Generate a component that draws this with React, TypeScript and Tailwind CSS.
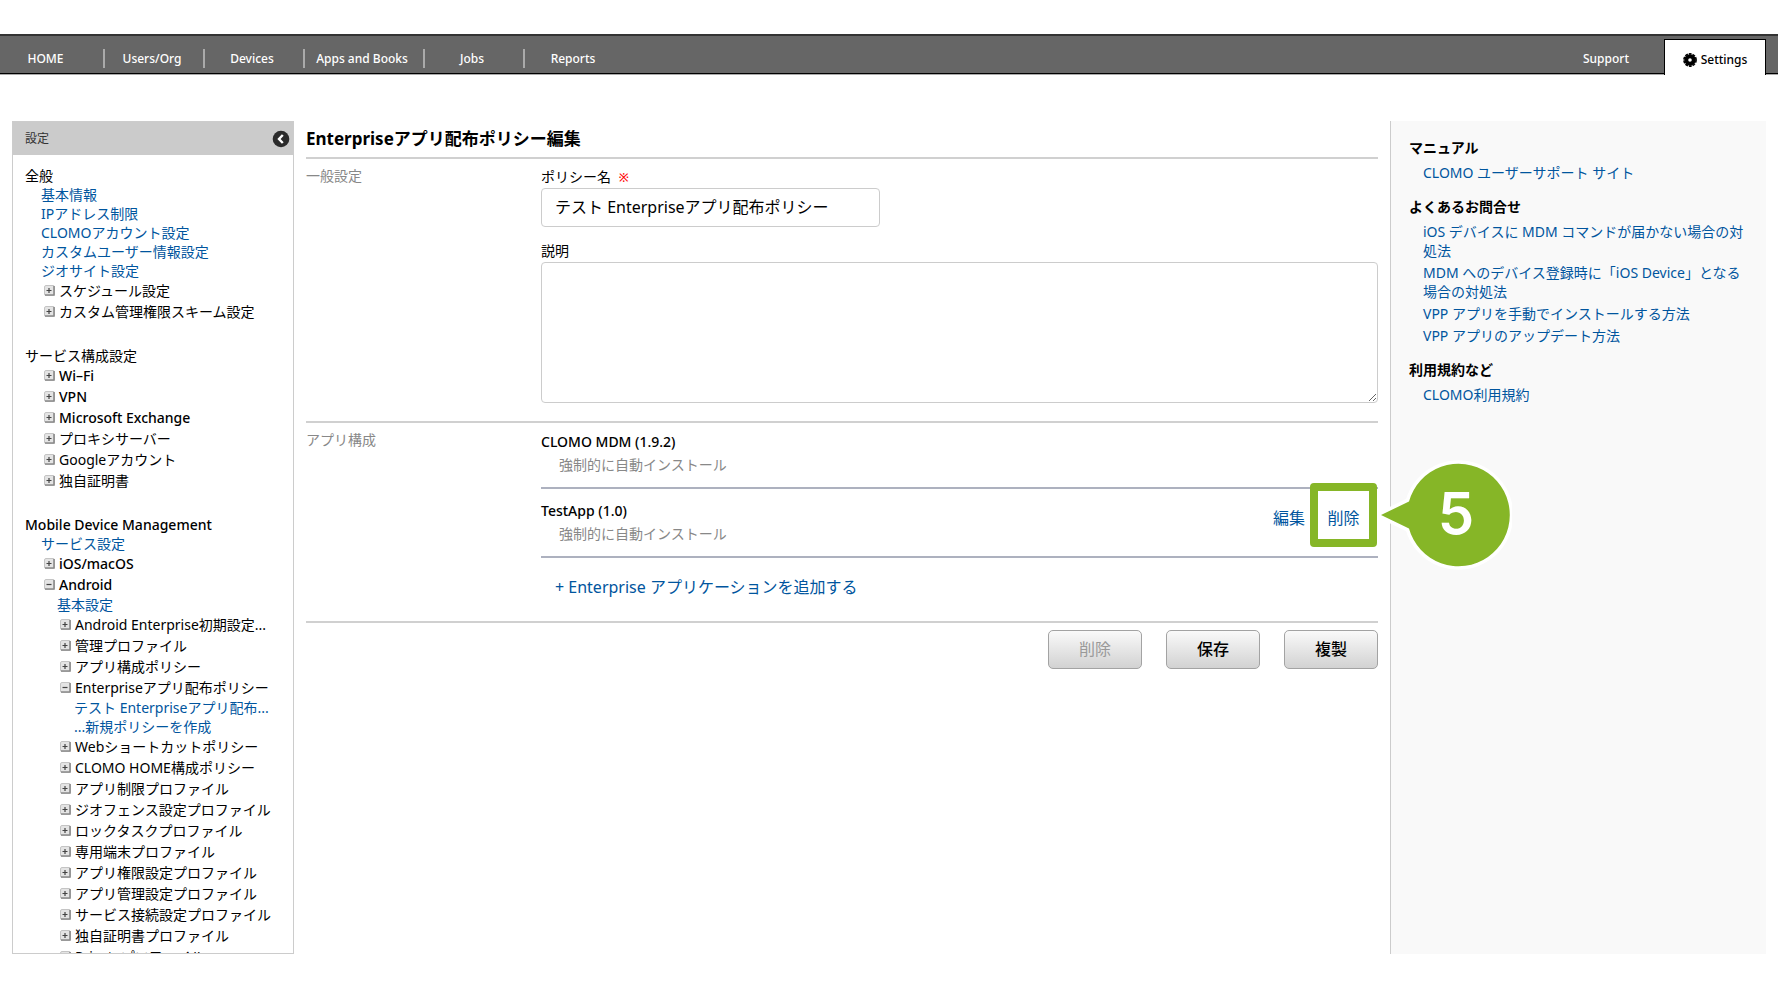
import React from "react";

const FONT = "font-['Noto_Sans','Noto_Sans_CJK_JP',sans-serif]";

type Row = { text: string; kind: "heading" | "link" | "closed" | "open"; level?: number };

const sections: Row[][] = [
  [
    { text: "全般", kind: "heading" },
    { text: "基本情報", kind: "link" },
    { text: "IPアドレス制限", kind: "link" },
    { text: "CLOMOアカウント設定", kind: "link" },
    { text: "カスタムユーザー情報設定", kind: "link" },
    { text: "ジオサイト設定", kind: "link" },
    { text: "スケジュール設定", kind: "closed" },
    { text: "カスタム管理権限スキーム設定", kind: "closed" },
  ],
  [
    { text: "サービス構成設定", kind: "heading" },
    { text: "Wi–Fi", kind: "closed" },
    { text: "VPN", kind: "closed" },
    { text: "Microsoft Exchange", kind: "closed" },
    { text: "プロキシサーバー", kind: "closed" },
    { text: "Googleアカウント", kind: "closed" },
    { text: "独自証明書", kind: "closed" },
  ],
  [
    { text: "Mobile Device Management", kind: "heading" },
    { text: "サービス設定", kind: "link" },
    { text: "iOS/macOS", kind: "closed" },
    { text: "Android", kind: "open" },
    { text: "基本設定", kind: "link", level: 1 },
    { text: "Android Enterprise初期設定...", kind: "closed", level: 1 },
    { text: "管理プロファイル", kind: "closed", level: 1 },
    { text: "アプリ構成ポリシー", kind: "closed", level: 1 },
    { text: "Enterpriseアプリ配布ポリシー", kind: "open", level: 1 },
    { text: "テスト Enterpriseアプリ配布...", kind: "link", level: 2 },
    { text: "...新規ポリシーを作成", kind: "link", level: 2 },
    { text: "Webショートカットポリシー", kind: "closed", level: 1 },
    { text: "CLOMO HOME構成ポリシー", kind: "closed", level: 1 },
    { text: "アプリ制限プロファイル", kind: "closed", level: 1 },
    { text: "ジオフェンス設定プロファイル", kind: "closed", level: 1 },
    { text: "ロックタスクプロファイル", kind: "closed", level: 1 },
    { text: "専用端末プロファイル", kind: "closed", level: 1 },
    { text: "アプリ権限設定プロファイル", kind: "closed", level: 1 },
    { text: "アプリ管理設定プロファイル", kind: "closed", level: 1 },
    { text: "サービス接続設定プロファイル", kind: "closed", level: 1 },
    { text: "独自証明書プロファイル", kind: "closed", level: 1 },
    { text: "Privateプロファイル", kind: "closed", level: 1 },
  ],
];

const indents = ["pl-4", "pl-8", "pl-[49px]"];

// Latin-only labels read lighter than Japanese ones, so they get a heavier weight.
const weightOf = (text: string) => (/^[ -~–]+$/.test(text) ? "font-medium" : "font-normal");

function ToggleIcon({ open }: { open: boolean }) {
  return (
    <svg width="11" height="11" viewBox="0 0 11 11" className="shrink-0" aria-hidden="true">
      <rect x="0.5" y="0.5" width="10" height="10" rx="1.5" fill="#e4e4e4" stroke="#c4c4c4" />
      <path d="M10 1v9H1" fill="none" stroke="#8a8a8a" strokeWidth="1.6" />
      <path d={open ? "M2.500 5.500h5" : "M2.500 5.500h5M5 3v5"} stroke="#444" strokeWidth="1.2" />
    </svg>
  );
}

function SidebarRow({ row }: { row: Row }) {
  const indent = indents[row.level ?? 0];
  if (row.kind === "heading")
    return <h3 className={`${weightOf(row.text)} leading-[19px]`}>{row.text}</h3>;
  if (row.kind === "link")
    return (
      <div className={indent}>
        <a href="#" className="block leading-[19px] text-[#00559e]">{row.text}</a>
      </div>
    );
  return (
    <div className={indent}>
      <button
        type="button"
        className={`${weightOf(row.text)} ml-[3px] flex items-center gap-1 leading-[21px]`}
      >
        <ToggleIcon open={row.kind === "open"} />
        {row.text}
      </button>
    </div>
  );
}

const navItems = [
  { label: "HOME", width: "w-[105px] pr-3" },
  { label: "Users/Org", width: "w-[100px] pr-1" },
  { label: "Devices", width: "w-[100px] pr-1" },
  { label: "Apps and Books", width: "w-[120px] pr-1" },
  { label: "Jobs", width: "w-[100px] pr-1" },
  { label: "Reports", width: "w-[100px] pr-1" },
];

function GearIcon() {
  return (
    <svg width="14" height="14" viewBox="0 0 14 14" aria-hidden="true">
      <circle cx="7" cy="7" r="3.800" fill="none" stroke="#000" strokeWidth="4" />
      <circle cx="7" cy="7" r="6.100" fill="none" stroke="#000" strokeWidth="1.600" strokeDasharray="2.800 1.030" />
    </svg>
  );
}

function TopNav() {
  return (
    <nav className="mt-[34px] flex h-10 shrink-0 justify-between border-t-2 border-b border-t-[#333] border-b-black bg-[#666] pr-3 text-xs font-medium text-white shadow-[0_1px_0_#aaa]">
      <ul className="flex items-center pt-3 pb-1">
        {navItems.map((item, i) => (
          <li
            key={item.label}
            className={`${item.width} text-center ${i < navItems.length - 1 ? "border-r-2 border-[#aaa]" : ""}`}
          >
            <a href="#" className="block leading-[19px]">{item.label}</a>
          </li>
        ))}
      </ul>
      <div className="flex">
        <a href="#" className="mr-[35px] pt-[13px] leading-[19px]">Support</a>
        <a
          href="#"
          className="mt-[3px] -mb-0.5 flex w-[102px] items-center justify-center gap-1 border border-b-0 border-black bg-white pt-1 text-black"
        >
          <GearIcon />
          Settings
        </a>
      </div>
    </nav>
  );
}

function Sidebar() {
  return (
    <aside className="w-[282px] shrink-0 overflow-hidden border border-[#ccc]">
      <div className="flex h-[33px] items-center justify-between bg-[#cbcbcb] pr-[3px] pl-3">
        <h2 className="text-xs text-[#333]">設定</h2>
        <button type="button" aria-label="サイドバーを閉じる">
          <svg width="18" height="18" viewBox="0 0 18 18" aria-hidden="true">
            <circle cx="9" cy="9" r="8.300" fill="#2b2b2b" />
            <path d="M10.800 5L7 9l3.800 4" fill="none" stroke="#fff" strokeWidth="2.400" />
          </svg>
        </button>
      </div>
      <div className="flex flex-col gap-6 pt-[11px] pl-3 text-sm whitespace-nowrap">
        {sections.map((rows) => (
          <section key={rows[0].text}>
            {rows.map((row) => (
              <SidebarRow key={row.text} row={row} />
            ))}
          </section>
        ))}
      </div>
    </aside>
  );
}

function Callout() {
  return (
    <div className="pointer-events-none absolute top-1/2 left-full z-10 -mt-[58px] flex h-[116px] w-[135px] items-center justify-end">
      <svg width="135" height="116" viewBox="0 0 135 116" className="absolute inset-0" aria-hidden="true">
        <path
          d="M4 58L32 44.500A51.300 51.300 0 1 1 32 71.500Z"
          fill="#86b627"
          stroke="#fff"
          strokeWidth="7"
          strokeLinejoin="round"
          paintOrder="stroke"
        />
      </svg>
      <span className="relative w-[112px] pb-1 text-center font-['Inter',sans-serif] text-[58px] leading-none font-semibold text-white">
        5
      </span>
    </div>
  );
}

function AppItem({ name, children }: { name: string; children?: React.ReactNode }) {
  return (
    <li className="flex items-start justify-between border-b-2 border-[#adb1bf]">
      <div className="pt-2.5 pb-[11px]">
        <p className="leading-[23px] font-medium">{name}</p>
        <p className="pl-[18px] leading-[23px] text-[#888]">強制的に自動インストール</p>
      </div>
      {children}
    </li>
  );
}

const buttonClass =
  "h-[39px] w-[94px] rounded-[5px] border border-[#a3a3a3] bg-linear-to-b from-[#fafafa] to-[#d2d2d2] pb-0.5 text-base font-medium text-black disabled:font-normal disabled:text-[#999]";

function PolicyForm() {
  return (
    <main className="ml-3 min-w-0 flex-1 text-sm text-black">
      <h1 className="h-9 text-[17px] leading-[36px] font-bold">Enterpriseアプリ配布ポリシー編集</h1>
      <form>
        <section className="flex border-t-2 border-[#d0d0d0] pb-[18px]">
          <h2 className="w-[235px] shrink-0 pt-1.5 leading-[22px] text-[#888]">一般設定</h2>
          <div className="flex min-w-0 flex-1 flex-col pt-[7px]">
            <label htmlFor="policy-name" className="leading-[22px]">
              ポリシー名 <span className="ml-1 text-xs font-medium text-[#f00]">※</span>
            </label>
            <input
              id="policy-name"
              defaultValue="テスト Enterpriseアプリ配布ポリシー"
              className="h-[39px] w-[339px] rounded-[4px] border border-[#ccc] px-[13px] pb-[3px] text-base"
            />
            <label htmlFor="policy-description" className="mt-[13px] leading-[22px]">
              説明
            </label>
            <textarea
              id="policy-description"
              className="h-[141px] w-full rounded-[4px] border border-[#ccc]"
            />
          </div>
        </section>
        <section className="flex border-t-2 border-[#d0d0d0]">
          <h2 className="w-[235px] shrink-0 pt-1.5 leading-[22px] text-[#888]">アプリ構成</h2>
          <div className="min-w-0 flex-1">
            <ul className="-mt-[3px]">
              <AppItem name="CLOMO MDM (1.9.2)" />
              <AppItem name="TestApp (1.0)">
                <div className="flex items-start text-base leading-[24px]">
                  <a href="#" className="mt-[17px] mr-[5px] text-[#00559e]">編集</a>
                  <div className="relative -mt-1.5 mr-px">
                    <a
                      href="#"
                      className="flex h-16 w-[67px] items-center justify-center rounded-[4px] border-8 border-[#86b627] bg-white pt-1.5 text-[#00559e]"
                    >
                      削除
                    </a>
                    <Callout />
                  </div>
                </div>
              </AppItem>
            </ul>
            <a href="#" className="ml-[14px] block pt-[17px] pb-[22px] text-base leading-[24px] text-[#00559e]">
              + Enterprise アプリケーションを追加する
            </a>
          </div>
        </section>
        <div className="flex justify-end gap-6 border-t-2 border-[#d0d0d0] pt-[7px]">
          <button type="button" disabled className={buttonClass}>削除</button>
          <button type="button" className={buttonClass}>保存</button>
          <button type="button" className={buttonClass}>複製</button>
        </div>
      </form>
    </main>
  );
}

const helpGroups = [
  { title: "マニュアル", links: ["CLOMO ユーザーサポート サイト"] },
  {
    title: "よくあるお問合せ",
    links: [
      "iOS デバイスに MDM コマンドが届かない場合の対処法",
      "MDM へのデバイス登録時に「iOS Device」となる場合の対処法",
      "VPP アプリを手動でインストールする方法",
      "VPP アプリのアップデート方法",
    ],
  },
  { title: "利用規約など", links: ["CLOMO利用規約"] },
];

function HelpPanel() {
  return (
    <aside className="ml-3 flex w-[376px] shrink-0 flex-col gap-[15px] border-l border-[#ccc] bg-[#f9f9f9] pt-[17px] pr-4 pl-[18px] text-sm leading-[19px]">
      {helpGroups.map((group) => (
        <section key={group.title}>
          <h2 className="mb-1.5 font-bold">{group.title}</h2>
          <ul className="flex flex-col gap-[3px] pl-[14px] text-[#00559e]">
            {group.links.map((link) => (
              <li key={link}>
                <a href="#">{link}</a>
              </li>
            ))}
          </ul>
        </section>
      ))}
    </aside>
  );
}

export default function App() {
  return (
    <div lang="ja" className={`${FONT} flex h-screen flex-col bg-white pb-[46px] text-black`}>
      <TopNav />
      <div className="mt-[47px] flex min-h-0 flex-1 px-3">
        <Sidebar />
        <PolicyForm />
        <HelpPanel />
      </div>
    </div>
  );
}
